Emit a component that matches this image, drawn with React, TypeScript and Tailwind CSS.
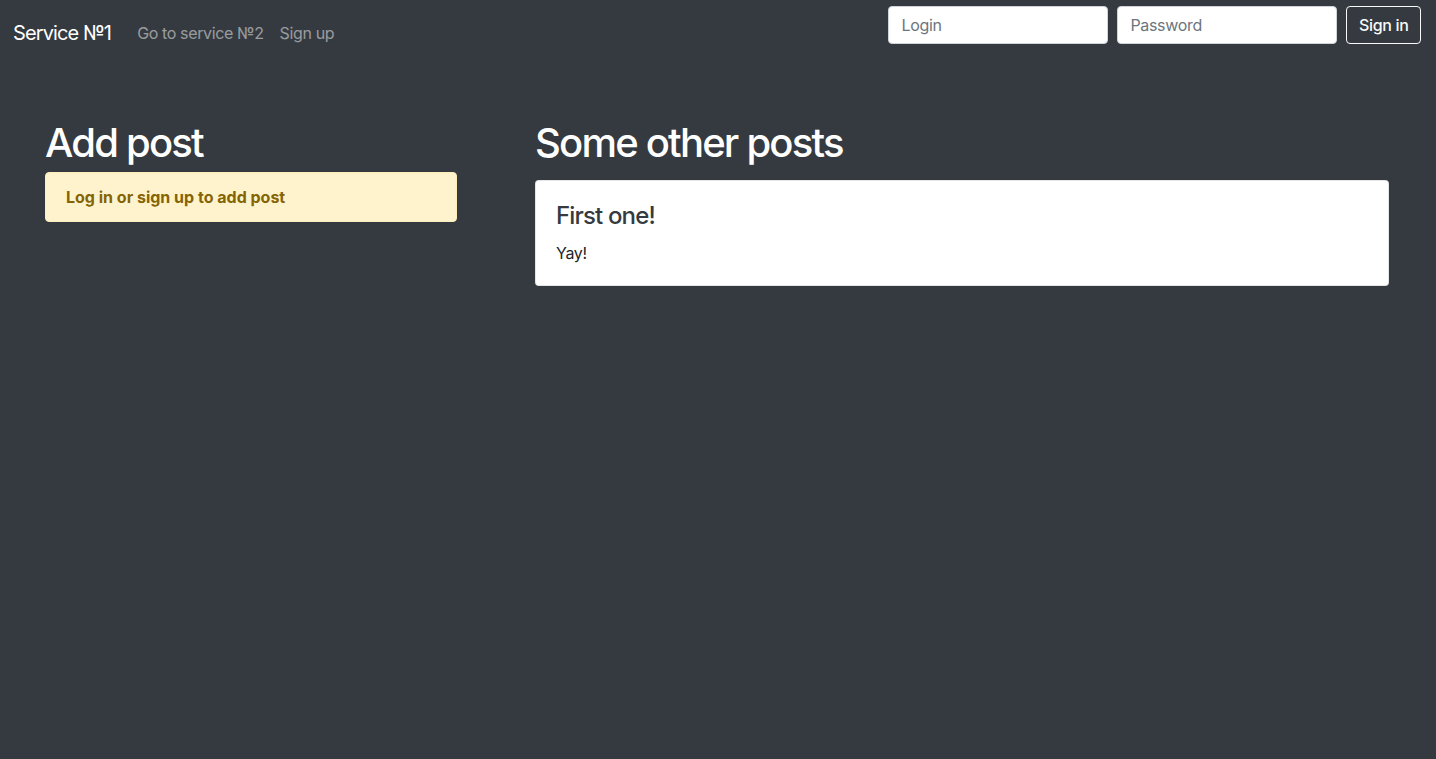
export default function App() {
  return (
    <div
      className="min-h-[759px] bg-[#343a40] text-white"
      style={{ fontFamily: 'Inter, "Noto Sans", sans-serif' }}
    >
      {/* Navbar */}
      <nav className="flex items-start justify-between pl-[13px] pr-[15px]">
        <div className="flex items-center pt-[18px]">
          <a className="text-[20px] leading-[30px] tracking-[-0.045em] text-white mr-[26px]">Service №1</a>
          <a className="text-[16px] leading-[30px] tracking-[-0.023em] text-white/50 mr-[16px]">Go to service №2</a>
          <a className="text-[16px] leading-[30px] tracking-[-0.023em] text-white/50">Sign up</a>
        </div>
        <form className="flex items-center gap-[9px] pt-[6px]">
          <input
            placeholder="Login"
            className="w-[220px] h-[38px] rounded-[4px] border border-[#ced4da] bg-white px-[12px] text-[16px] tracking-[-0.02em] text-[#495057] placeholder:text-[#6c757d] outline-none"
          />
          <input
            type="password"
            placeholder="Password"
            className="w-[220px] h-[38px] rounded-[4px] border border-[#ced4da] bg-white px-[12px] text-[16px] tracking-[-0.02em] text-[#495057] placeholder:text-[#6c757d] outline-none"
          />
          <button
            type="button"
            className="h-[38px] px-[11.5px] rounded-[4px] border border-[#f8f9fa] text-[16px] tracking-[-0.02em] font-medium text-[#f8f9fa]"
          >
            Sign in
          </button>
        </form>
      </nav>

      {/* Content */}
      <main className="grid grid-cols-[412px_1fr] gap-[78px] pl-[45px] pr-[47px] pt-[71px]">
        <section>
          <h1 className="text-[40px] leading-[48px] font-medium tracking-[-0.045em] mb-[5px]">Add post</h1>
          <div className="rounded-[4px] border border-[#ffeeba] bg-[#fff3cd] px-[20px] py-[12px] text-[16px] leading-[24px] font-bold text-[#856404]">
            Log in or sign up to add post
          </div>
        </section>
        <section>
          <h1 className="text-[40px] leading-[48px] font-medium tracking-[-0.045em] mb-[13px]">Some other posts</h1>
          <div className="rounded-[4px] border border-black/10 bg-white px-[20px] pt-[23px] pb-[20px] text-[#212529]">
            <h5 className="text-[24px] leading-[24px] font-medium tracking-[-0.035em] mb-[13px] text-[#343a40]">First one!</h5>
            <p className="text-[16px] leading-[24px] tracking-[-0.02em]">Yay!</p>
          </div>
        </section>
      </main>
    </div>
  );
}
